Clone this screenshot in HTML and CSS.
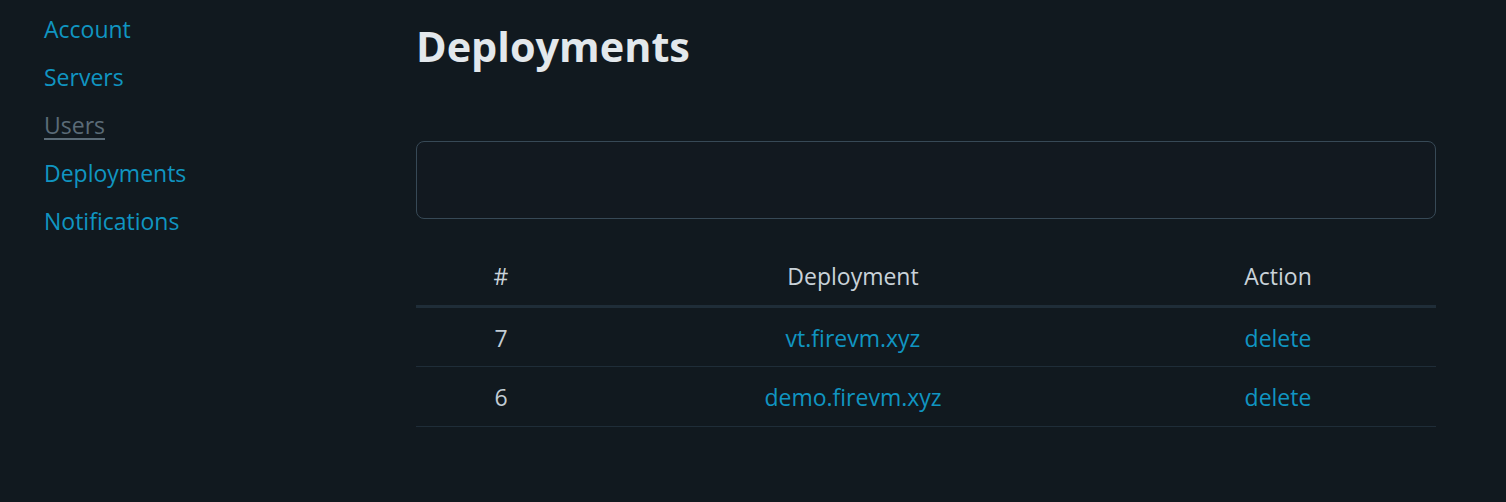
FILE: index.html
```html
<!DOCTYPE html>
<html lang="en">
<head>
<meta charset="utf-8">
<title>Deployments</title>
<link rel="stylesheet" href="styles.css">
</head>
<body>
<div class="layout">
  <nav class="sidebar">
    <ul class="nav-list">
      <li><a class="nav-link" href="#">Account</a></li>
      <li><a class="nav-link" href="#">Servers</a></li>
      <li><a class="nav-link nav-link-muted" href="#">Users</a></li>
      <li><a class="nav-link" href="#">Deployments</a></li>
      <li><a class="nav-link" href="#">Notifications</a></li>
    </ul>
  </nav>
  <main class="content">
    <h1 class="title">Deployments</h1>
    <div class="panel"></div>
    <table class="table">
      <thead>
        <tr>
          <th class="col-num">#</th>
          <th class="col-dep">Deployment</th>
          <th class="col-act">Action</th>
        </tr>
      </thead>
      <tbody>
        <tr>
          <td>7</td>
          <td><a class="link" href="#">vt.firevm.xyz</a></td>
          <td><a class="link" href="#">delete</a></td>
        </tr>
        <tr>
          <td>6</td>
          <td><a class="link" href="#">demo.firevm.xyz</a></td>
          <td><a class="link" href="#">delete</a></td>
        </tr>
      </tbody>
    </table>
  </main>
</div>
</body>
</html>
```
FILE: styles.css
```css
* { box-sizing: border-box; }
html, body {
  margin: 0;
  background: #11191f;
  color: #c2ccd4;
  font-family: "Open Sans", "Noto Sans", sans-serif;
  font-size: 23px;
}
.layout {
  display: grid;
  grid-template-columns: 372px 1020px;
  padding-left: 44px;
}
.nav-list {
  list-style: none;
  margin: 0;
  padding: 5px 0 0;
}
.nav-list li {
  line-height: 30px;
  padding: 9px 0;
}
.nav-link {
  color: #1095c1;
  text-decoration: none;
}
.nav-link-muted {
  color: #5b6b77;
  text-decoration: underline;
  text-underline-offset: 4px;
}
.title {
  margin: 21px 0 0;
  font-size: 41.4px;
  line-height: 50px;
  font-weight: 700;
  color: #e3e8ec;
}
.panel {
  margin-top: 70px;
  height: 78px;
  border: 1px solid #374956;
  border-radius: 8px;
  background: #121920;
}
.table {
  width: 100%;
  margin-top: 28px;
  border-collapse: collapse;
  text-align: center;
}
.table th, .table td {
  height: 60px;
  padding: 0 10px;
  font-weight: 400;
  border-bottom: 1px solid #1f2d38;
}
.table th {
  height: 59px;
  border-bottom: 3px solid #1f2d38;
  color: #c9d2d9;
}
.table td {
  padding-top: 2px;
}
.col-num { width: 170px; }
.col-dep { width: 534px; }
.col-act { width: 316px; }
.link {
  color: #1095c1;
  text-decoration: none;
}
```
